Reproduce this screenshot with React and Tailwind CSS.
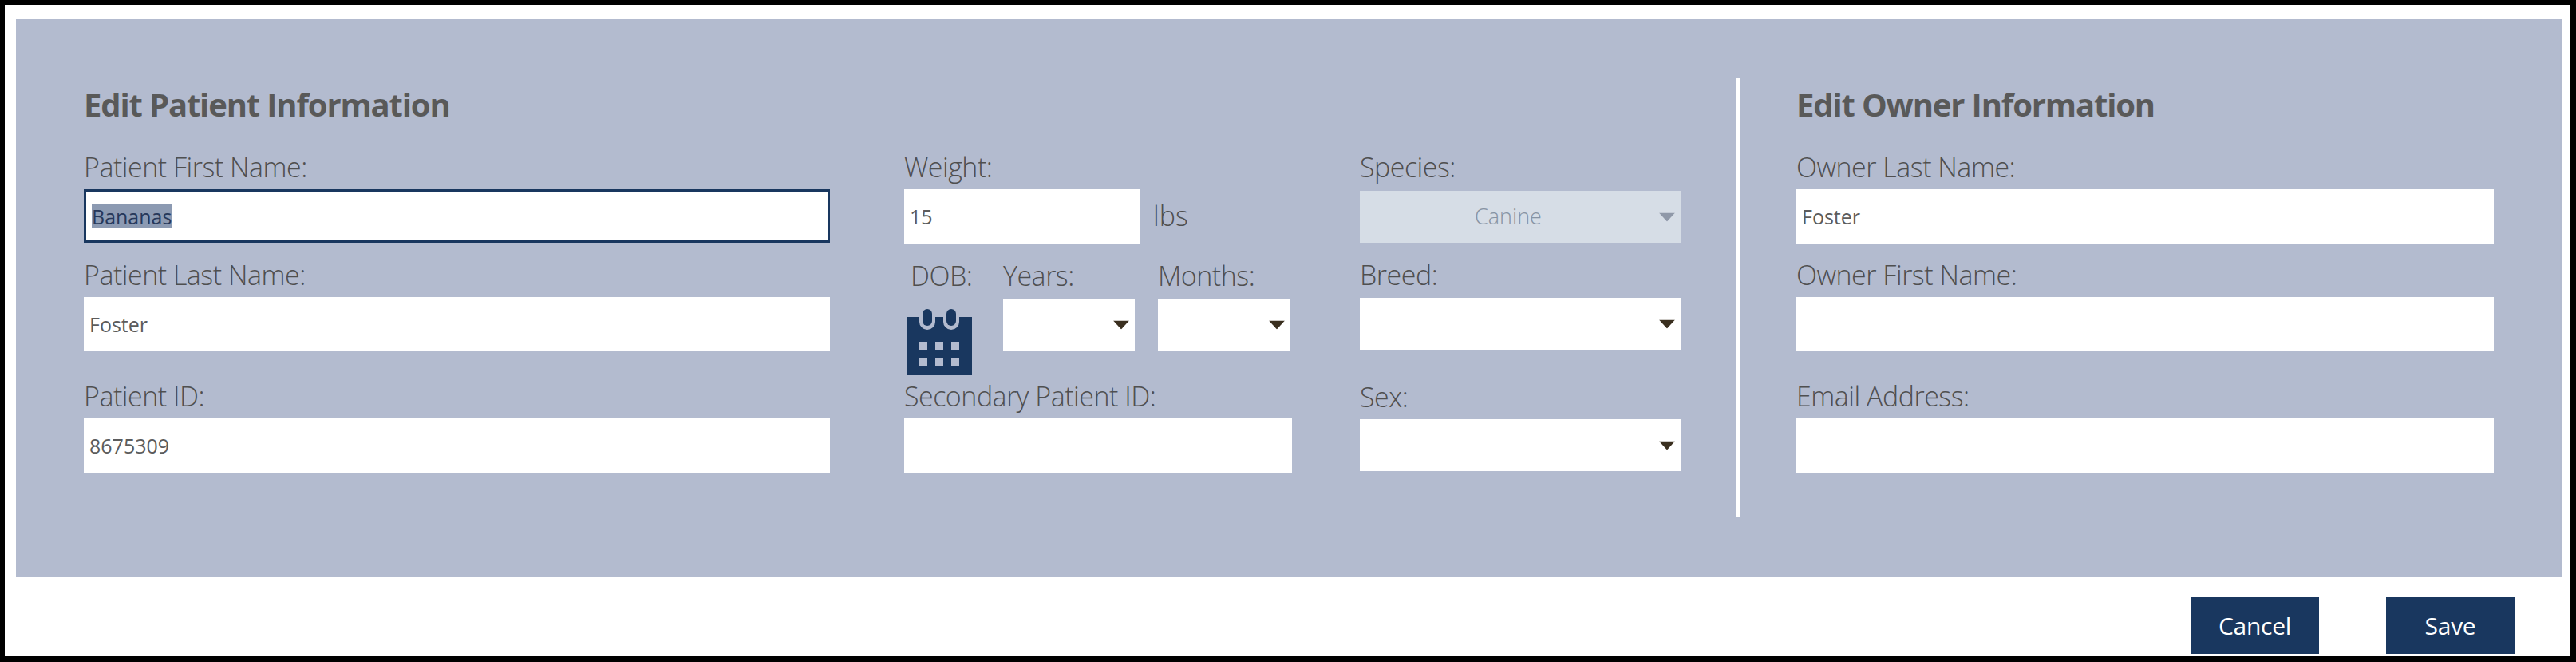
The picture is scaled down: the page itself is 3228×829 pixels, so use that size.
const inputBase = "block bg-white text-[25px] font-normal text-[#5c5c5c] outline-none";

function Caret({ muted }) {
  return (
    <svg width="20" height="11" viewBox="0 0 20 11" className="absolute right-[7px] top-1/2 -translate-y-1/2">
      <path d="M0 0h20L10 11z" fill={muted ? "#8f98a8" : "#3a2f1f"} />
    </svg>
  );
}

function Label({ children, className = "" }) {
  return (
    <label className={`block h-[47px] leading-[39px] text-[34px] font-light text-[#4f4f4f] tracking-[-0.5px] whitespace-nowrap ${className}`}>
      {children}
    </label>
  );
}

function TextInput({ value = "", className = "" }) {
  return <input readOnly value={value} className={`${inputBase} h-[68px] pl-[7px] ${className}`} />;
}

function SelectBox({ className = "", value, disabled }) {
  return (
    <div className={`relative h-[65px] flex items-center justify-center ${disabled ? "bg-[#d6dde6] text-[#8793a3]" : "bg-white"} ${className}`}>
      {value && <span className="text-[27px] font-light -ml-[30px]">{value}</span>}
      <Caret muted={disabled} />
    </div>
  );
}

function Heading({ children }) {
  return (
    <h2 className="h-[92px] pt-[8px] text-[40px] leading-[50px] font-bold text-[#595959] tracking-[-1.15px] whitespace-nowrap">
      {children}
    </h2>
  );
}

function CalendarIcon() {
  return (
    <svg width="82" height="82" viewBox="0 0 82 82" className="ml-[3px] mt-[14px]">
      <rect x="0" y="10" width="82" height="72" fill="#19375f" />
      <path d="M16 10h20v6a10 10 0 0 1-20 0zM46 10h20v6a10 10 0 0 1-20 0z" fill="#b3bbcf" />
      <rect x="20" y="0" width="12" height="21" rx="6" fill="#19375f" />
      <rect x="50" y="0" width="12" height="21" rx="6" fill="#19375f" />
      {[41, 61].map((y) =>
        [16, 36, 56].map((x) => <rect key={`${x}-${y}`} x={x} y={y} width="10" height="10" fill="#b3bbcf" />)
      )}
    </svg>
  );
}

export default function App() {
  return (
    <div className="h-[829px] w-[3228px] overflow-hidden bg-white border-black border-t-[6px] border-l-[6px] border-r-[7px] border-b-[7px] font-['Open_Sans',sans-serif]">
      {/* Edit panel */}
      <div className="ml-[14px] mt-[18px] mr-[11px] h-[699px] bg-[#b3bbcf] flex pl-[85px] pt-[74px]">
        {/* Patient names */}
        <div className="w-[935px] shrink-0">
          <Heading>Edit Patient Information</Heading>
          <Label>Patient First Name:</Label>
          <div className="h-[67px] border-[3px] border-[#19375f] bg-white flex items-center pl-[7px]">
            <span className="bg-[#8c9ab2] text-[#27385a] text-[25px] leading-[30px]">Bananas</span>
          </div>
          <Label className="mt-[21px]">Patient Last Name:</Label>
          <TextInput value="Foster" className="w-full" />
          <Label className="mt-[37px]">Patient ID:</Label>
          <TextInput value="8675309" className="w-full" />
        </div>

        {/* Weight, DOB, secondary id */}
        <div className="w-[486px] shrink-0 ml-[93px] pt-[92px]">
          <Label>Weight:</Label>
          <div className="flex items-center">
            <TextInput value="15" className="w-[295px]" />
            <span className="ml-[17px] -mt-[2px] text-[34px] font-light text-[#4f4f4f]">lbs</span>
          </div>
          <div className="flex mt-[21px] h-[115px]">
            <div className="w-[124px]">
              <Label className="pl-[8px]">DOB:</Label>
              <CalendarIcon />
            </div>
            <div className="w-[194px]">
              <Label>Years:</Label>
              <SelectBox className="w-[165px] mt-[1px]" />
            </div>
            <div>
              <Label>Months:</Label>
              <SelectBox className="w-[166px] mt-[1px]" />
            </div>
          </div>
          <Label className="mt-[36px]">Secondary Patient ID:</Label>
          <TextInput className="w-full" />
        </div>

        {/* Species, breed, sex */}
        <div className="w-[402px] shrink-0 ml-[85px] pt-[92px]">
          <Label>Species:</Label>
          <SelectBox className="mt-[2px]" value="Canine" disabled />
          <Label className="mt-[21px]">Breed:</Label>
          <SelectBox className="mt-[1px]" />
          <Label className="mt-[40px]">Sex:</Label>
          <SelectBox />
        </div>

        <div className="w-[5px] h-[549px] bg-white shrink-0 ml-[69px]" />

        {/* Owner */}
        <div className="w-[874px] shrink-0 ml-[71px]">
          <Heading>Edit Owner Information</Heading>
          <Label>Owner Last Name:</Label>
          <TextInput value="Foster" className="w-full" />
          <Label className="mt-[20px]">Owner First Name:</Label>
          <TextInput className="w-full" />
          <Label className="mt-[37px]">Email Address:</Label>
          <TextInput className="w-full" />
        </div>
      </div>

      {/* Footer actions */}
      <div className="flex justify-end gap-[84px] mt-[25px] pr-[70px]">
        <button className="w-[161px] h-[71px] bg-[#19375f] text-white text-[30px] tracking-[-0.3px]">Cancel</button>
        <button className="w-[161px] h-[71px] bg-[#19375f] text-white text-[30px] tracking-[-0.3px]">Save</button>
      </div>
    </div>
  );
}
